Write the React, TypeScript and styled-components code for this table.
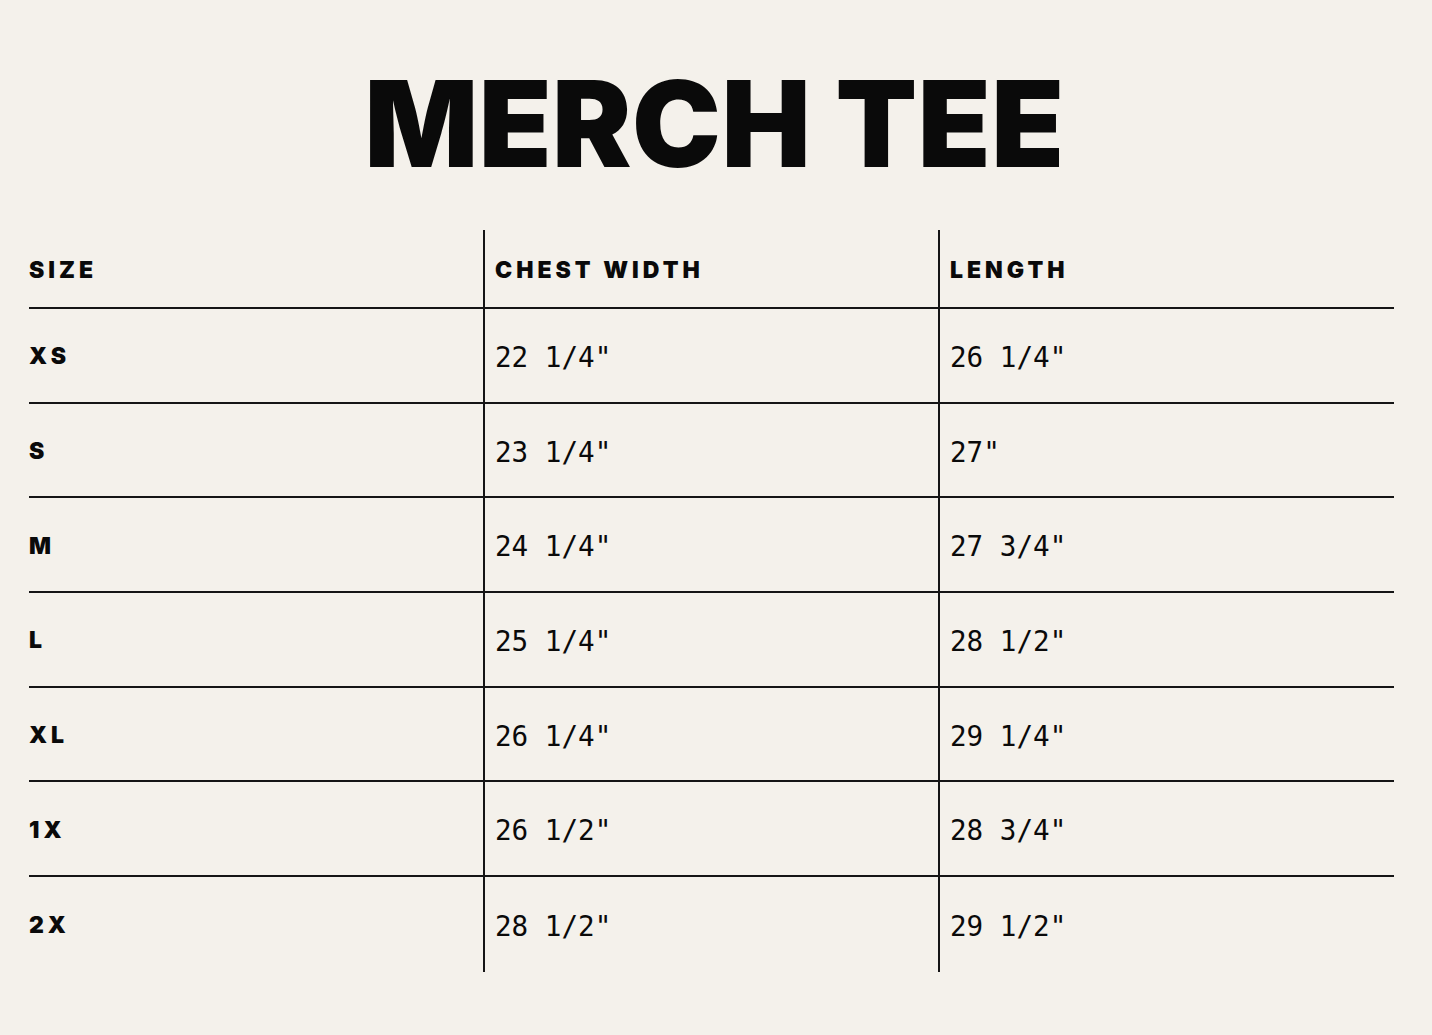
import React from 'react';
import styled, { createGlobalStyle } from 'styled-components';

const GlobalStyle = createGlobalStyle`
  html, body {
    margin: 0;
    padding: 0;
    background: #f4f1eb;
  }
`;

const Page = styled.div`
  min-height: 1035px;
  background: #f4f1eb;
  color: #0a0a0a;
  padding: 64px 38px 0 29px;
  box-sizing: border-box;
`;

const Title = styled.h1`
  margin: 0 0 46px;
  text-align: center;
  font-family: Inter, "Liberation Sans", sans-serif;
  font-weight: 900;
  font-size: 119px;
  line-height: 120px;
  letter-spacing: 0.5px;
  padding-left: 6px;
`;

const Table = styled.div`
  display: grid;
  grid-template-columns: 454px 455px 1fr;
`;

const Cell = styled.div<{ $col: number; $header?: boolean; $last?: boolean }>`
  display: flex;
  align-items: center;
  height: ${p => (p.$header ? '79px' : '94.7px')};
  box-sizing: border-box;
  padding-left: ${p => (p.$col === 0 ? '0' : '10px')};
  border-left: ${p => (p.$col === 0 ? 'none' : '2px solid #151515')};
  border-bottom: ${p => (p.$last ? 'none' : '2px solid #151515')};
`;

const HeadText = styled.span`
  font-family: Inter, "Liberation Sans", sans-serif;
  font-weight: 900;
  font-size: 23px;
  letter-spacing: 4px;
  padding-top: 2px;
`;

const SizeText = styled(HeadText)``;

const ValueText = styled.span`
  font-family: "DejaVu Sans Mono", "Liberation Mono", monospace;
  font-size: 27.6px;
  white-space: pre;
  padding-top: 4px;
`;

const rows: [string, string, string][] = [
  ['XS', '22 1/4"', '26 1/4"'],
  ['S', '23 1/4"', '27"'],
  ['M', '24 1/4"', '27 3/4"'],
  ['L', '25 1/4"', '28 1/2"'],
  ['XL', '26 1/4"', '29 1/4"'],
  ['1X', '26 1/2"', '28 3/4"'],
  ['2X', '28 1/2"', '29 1/2"'],
];

const headers = ['SIZE', 'CHEST WIDTH', 'LENGTH'];

export default function App() {
  return (
    <Page>
      <GlobalStyle />
      <Title>MERCH TEE</Title>
      <Table>
        {headers.map((h, i) => (
          <Cell key={h} $col={i} $header>
            <HeadText>{h}</HeadText>
          </Cell>
        ))}
        {rows.map((r, ri) =>
          r.map((v, ci) => (
            <Cell key={ri + '-' + ci} $col={ci} $last={ri === rows.length - 1}>
              {ci === 0 ? <SizeText>{v}</SizeText> : <ValueText>{v}</ValueText>}
            </Cell>
          ))
        )}
      </Table>
    </Page>
  );
}
